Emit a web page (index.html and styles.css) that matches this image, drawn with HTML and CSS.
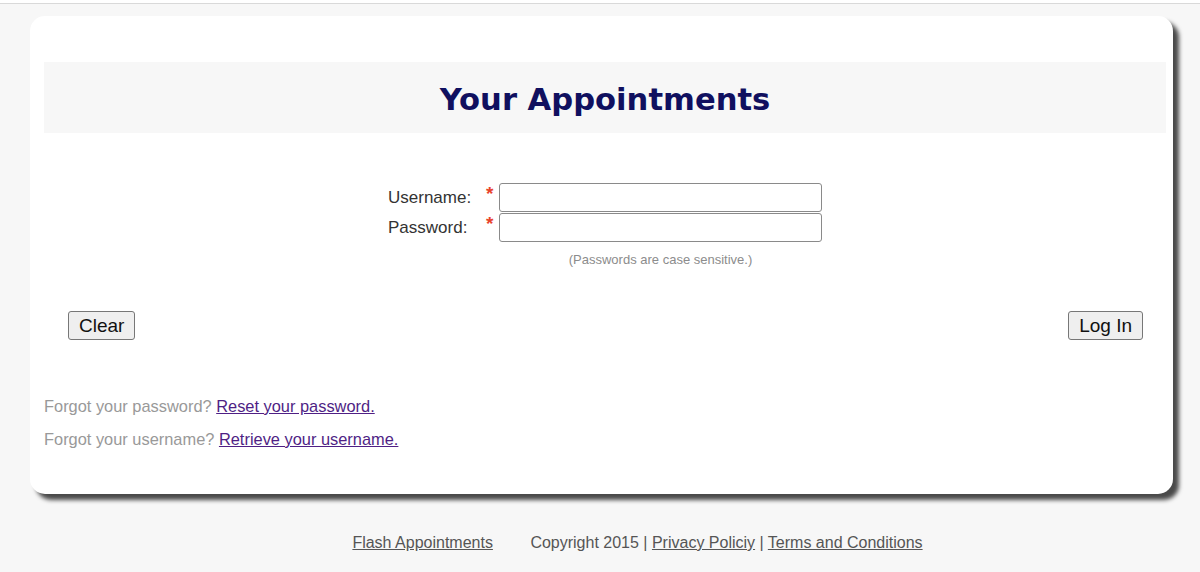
FILE: index.html
```html
<!DOCTYPE html>
<html lang="en">
<head>
    <meta charset="UTF-8">
    <meta name="viewport" content="width=device-width, initial-scale=1.0">
    <title>Your Appointments</title>
    <link rel="stylesheet" href="styles.css">
</head>
<body>
<div class="topline"></div>
<div class="card">
    <div class="head">
        <h1>Your Appointments</h1>
    </div>
    <form class="login">
        <div class="fields">
            <label class="lbl" for="user">Username:</label>
            <span class="req">*</span>
            <input type="text" id="user" class="inp">
            <label class="lbl" for="pass">Password:</label>
            <span class="req">*</span>
            <input type="password" id="pass" class="inp">
            <span></span>
            <span></span>
            <p class="hint">(Passwords are case sensitive.)</p>
        </div>
        <div class="buttons">
            <button type="reset" class="btn">Clear</button>
            <button type="button" class="btn">Log In</button>
        </div>
    </form>
    <div class="forgot">
        <p>Forgot your password? <a href="javascript:;">Reset your password.</a></p>
        <p>Forgot your username? <a href="javascript:;">Retrieve your username.</a></p>
    </div>
</div>
<div class="footer">
    <a href="javascript:;" class="brand">Flash Appointments</a>
    <span>Copyright 2015 | <a href="javascript:;">Privacy Policiy</a> | <a href="javascript:;">Terms and Conditions</a></span>
</div>
</body>
</html>
```

FILE: styles.css
```css
*{
    margin: 0;
    padding: 0;
    box-sizing: border-box;
}
body{
    background: #f7f7f7;
    font-family: "Liberation Sans", Arial, sans-serif;
    color: #333;
}
.topline{
    height: 4px;
    background: #fff;
    border-bottom: 1px solid #d9d9d9;
}
.card{
    width: 1143px;
    height: 478px;
    margin: 12px 0 0 30px;
    padding: 46px 7px 0 14px;
    background: #fff;
    border-radius: 15px;
    box-shadow: 6px 6px 4px #4a4a4a;
}
.head{
    height: 71px;
    background: #f7f7f7;
    display: flex;
    align-items: center;
    justify-content: center;
}
.head h1{
    font-family: "DejaVu Sans", Verdana, sans-serif;
    font-weight: bold;
    font-size: 30.6px;
    color: #10105f;
    margin-top: 3px;
}
.fields{
    display: grid;
    grid-template-columns: 429px 26px 323px;
    align-items: center;
    margin-top: 50px;
    font-size: 17px;
}
.lbl{
    padding-left: 344px;
}
.req{
    color: #e8432c;
    font-weight: bold;
    font-size: 19px;
    padding-left: 13px;
    align-self: start;
    line-height: 22px;
}
.inp{
    height: 29px;
    border: 1px solid #8a8a8a;
    border-radius: 3px;
    background: #fff;
    margin-bottom: 1px;
}
.hint{
    font-size: 13px;
    color: #8c8c8c;
    text-align: center;
    margin-top: 9px;
}
.buttons{
    display: flex;
    justify-content: space-between;
    padding: 0 23px 0 24px;
    margin-top: 44px;
}
.btn{
    font-family: "Liberation Sans", Arial, sans-serif;
    font-size: 19px;
    color: #111;
    background: #efefef;
    border: 1px solid #777;
    border-radius: 3px;
    height: 29px;
    padding: 0 10px;
}
.forgot{
    margin-top: 50px;
    font-size: 16.4px;
    color: #999;
}
.forgot p{
    line-height: 33px;
}
.forgot a{
    color: #4f1f85;
}
.footer{
    text-align: center;
    font-size: 16px;
    color: #555;
    margin-top: 40px;
    padding-left: 75px;
}
.footer a{
    color: #555;
}
.footer .brand{
    margin-right: 33px;
}
```
